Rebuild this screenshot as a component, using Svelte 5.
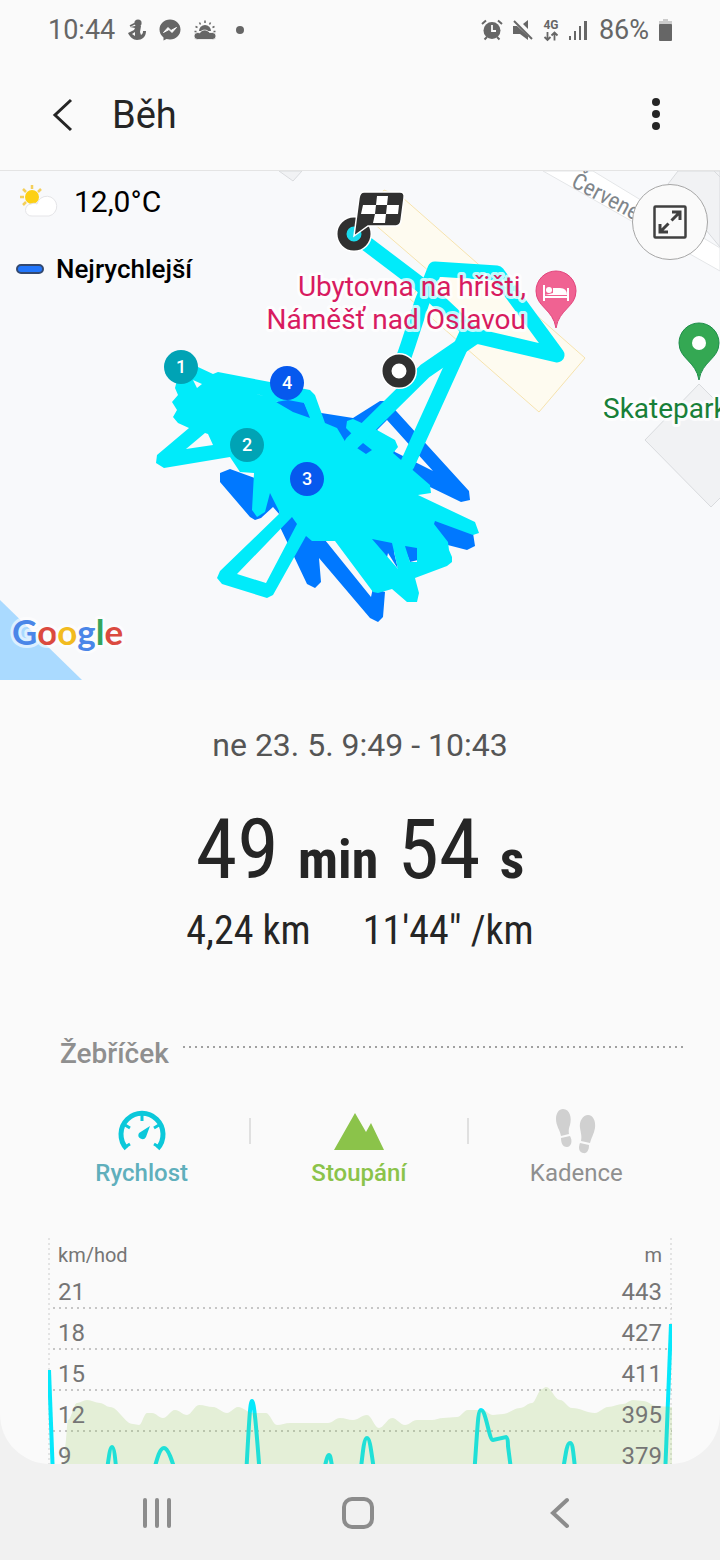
<script lang="ts">
  /**
   * Workout Detail Screen
   *
   * Route map, workout summary and the speed / elevation chart of one run.
   *
   * @component
   */

  type Point = [number, number];

  const kilometers = [
    { label: '1', x: 181, y: 367, fast: false },
    { label: '2', x: 247, y: 445, fast: false },
    { label: '3', x: 307, y: 479, fast: true },
    { label: '4', x: 287, y: 383, fast: true },
  ];

  const axisRows = [
    { speed: '21', elevation: '443' },
    { speed: '18', elevation: '427' },
    { speed: '15', elevation: '411' },
    { speed: '12', elevation: '395' },
    { speed: '9', elevation: '379' },
  ];

  const gridLines = [70, 111, 152, 193];

  const elevation: Point[] = [
    [16, 239], [17, 209], [20, 182], [29, 165], [39, 162], [52, 165], [62, 169], [85, 186],
    [91, 187], [99, 175], [104, 175], [115, 180], [127, 172], [139, 177], [151, 167], [165, 169],
    [179, 175], [190, 169], [205, 175], [218, 175], [229, 187], [242, 185], [280, 185], [292, 180],
    [305, 182], [319, 177], [331, 190], [344, 180], [357, 187], [369, 182], [384, 182], [395, 180],
    [409, 179], [420, 172], [434, 172], [445, 177], [455, 176], [472, 170], [484, 165], [494, 151],
    [498, 149], [512, 162], [524, 170], [547, 175], [560, 169], [575, 166], [585, 162], [595, 163],
    [609, 168], [624, 169],
  ];

  // Smooth curve through the points, flat at each of them
  function smooth(points: Point[]): string {
    return points
      .map(([x, y], i) => {
        if (i === 0) return `M${x} ${y}`;
        const [px, py] = points[i - 1];
        const dx = (x - px) * 0.36;
        return `C${px + dx} ${py} ${x - dx} ${y} ${x} ${y}`;
      })
      .join(' ');
  }

  const elevationArea = `${smooth(elevation)} V239 H16 Z`;
</script>

<div class="screen">
  <div class="content">
    <div class="status-bar">
      <div class="status-group">
        <span class="status-text">10:44</span>
        <svg width="18" height="22" viewBox="0 0 18 22" aria-hidden="true">
          <circle cx="10" cy="4" r="3.6" fill="currentColor" />
          <path d="M7 7H13L12 13L13 16C15 15 15 13 15 12H18C18 18 14 21 9 21C5 21 2 18 0 14L6 11L7 9L2 8Z" fill="currentColor" />
          <path d="M2 7L7 4.500" stroke="currentColor" stroke-width="1.6" />
          <path d="M4 15L7 13L7 17Z" fill="#fafafa" />
        </svg>
        <svg width="22" height="22" viewBox="0 0 22 22" aria-hidden="true">
          <path d="M11 .5C5 .5.5 5 .5 10.500c0 3.300 1.500 6 4 7.900V21.500l3-1.500c1.100.3 2.300.5 3.500.5 6 0 10.500-4.500 10.500-10S17 .5 11 .5Z" fill="currentColor" />
          <path d="M4.500 13.500L9 8.500L12 11.500L17.500 8.500L13 13.500L10 10.500Z" fill="#fafafa" stroke="#fafafa" stroke-linejoin="round" />
        </svg>
        <svg width="22" height="20" viewBox="0 0 22 20" fill="none" aria-hidden="true">
          <path d="M5 11A6 6 0 0 1 17 11" fill="currentColor" />
          <path d="M3.500 19.500a3.500 3.500 0 0 1 0-7c1 0 1.500.2 2 .5A6 6 0 0 1 15.500 12.500h3a3.500 3.500 0 0 1 0 7Z" fill="currentColor" stroke="#fafafa" stroke-width=".8" />
          <path d="M11 .5V3M5.500 2.500L6.500 4.500M16.500 2.500L15.500 4.500M1.500 6.500L3.500 7.500M20.500 6.500L18.500 7.500M.5 11.500H2.500M19.500 11.500H21.500" stroke="currentColor" stroke-width="1.500" />
        </svg>
        <span class="more-dot"></span>
      </div>
      <div class="status-group status-group--right">
        <svg width="22" height="22" viewBox="0 0 22 22" fill="none" stroke="currentColor" stroke-width="2" aria-hidden="true">
          <circle cx="11" cy="11.500" r="8.500" fill="currentColor" stroke="none" />
          <path d="M1 5L5 1.500M21 5L17 1.500M3.500 20.500L6 18M18.500 20.500L16 18" />
          <path d="M11 6V12H15" stroke="#fafafa" stroke-width="1.800" />
        </svg>
        <svg width="20" height="20" viewBox="0 0 20 20" aria-hidden="true">
          <path d="M0 6H4L15 16V20L7 14H0Z" fill="currentColor" />
          <path d="M15 0V9L10 4Z" fill="currentColor" />
          <path d="M2 0L20 18" stroke="#fafafa" stroke-width="2" />
          <path d="M1 1L19 19" stroke="currentColor" stroke-width="2" />
        </svg>
        <svg width="16" height="24" viewBox="0 0 16 24" aria-hidden="true">
          <text x="8" y="11" class="network-text">4G</text>
          <path d="M4.500 14V22M1.500 19L4.500 22L7.500 19M11.500 22.500V14.500M8.500 17.500L11.500 14.500L14.500 17.500" stroke="currentColor" stroke-width="1.800" fill="none" />
        </svg>
        <svg width="18" height="20" viewBox="0 0 18 20" fill="currentColor" aria-hidden="true">
          <rect x="0" y="16" width="2" height="4" />
          <rect x="5" y="11" width="2" height="9" />
          <rect x="10" y="6" width="2" height="14" />
          <rect x="15" y="1" width="3" height="19" />
        </svg>
        <span class="status-text battery-text">86%</span>
        <svg width="13" height="22" viewBox="0 0 13 22" aria-hidden="true">
          <path d="M4 0H9V2H13V6H0V2H4Z" fill="#cccccc" />
          <rect y="5" width="13" height="17" rx="1" fill="currentColor" />
        </svg>
      </div>
    </div>

    <header class="app-bar">
      <button class="icon-button" aria-label="Zpět">
        <svg width="24" height="34" viewBox="0 0 24 34" fill="none" aria-hidden="true">
          <path d="M19 2L3 17L19 32" stroke="currentColor" stroke-width="3" />
        </svg>
      </button>
      <h1>Běh</h1>
      <button class="icon-button" aria-label="Další možnosti">
        <svg width="24" height="34" viewBox="0 0 24 34" fill="currentColor" aria-hidden="true">
          <circle cx="12" cy="4" r="4" />
          <circle cx="12" cy="16" r="4" />
          <circle cx="12" cy="28" r="4" />
        </svg>
      </button>
    </header>

    <section class="map">
      <svg class="map-canvas" viewBox="0 171 720 509" preserveAspectRatio="xMidYMid slice" role="img" aria-label="Mapa trasy">
        <!-- Terrain -->
        <rect x="0" y="171" width="720" height="509" fill="#f8f9fb" />
        <path d="M0 600L82 680H0Z" fill="#aadaff" />
        <path d="M543 171H593L720 248V271Z" fill="#ffffff" stroke="#e4e6e8" />
        <path d="M678 171L668 184L720 247V171Z" fill="#f1f2f4" stroke="#d9dbde" />
        <path d="M714 171L720 177" stroke="#d9dbde" />
        <path d="M699 384L645 440L711 507L725 493V410Z" fill="#f1f2f4" stroke="#d9dbde" />
        <path d="M279 171L293 181L302 171Z" fill="#f1f2f4" stroke="#d9dbde" />
        <path d="M403 198L585 358L539 412L410 299L430 272L365 216L384 190Z" fill="#fefbf0" stroke="#f6e3ae" />
        <text class="street" x="570" y="186" transform="rotate(28 570 186)">Červené</text>

        <!-- Fastest parts of the route -->
        <g fill="#0078ff">
          <path d="M275 403L287 396L303 400L312 420L293 413Z" />
          <path fill-rule="evenodd" d="M315 412L353 418L380 401H387L469 491L470 500L461 502L430 487L400 480L330 470ZM377 430L387 420L433 471L395 452Z" />
          <path d="M220 473L230 469L252 477L275 485L280 515L273 507L261 518L255 520L250 517L220 482Z" />
          <path d="M280 527L292 513L325 540L371 597L373 588L385 592L383 617L378 622L370 618L319 558L321 582L315 588L307 584Z" />
          <path d="M430 518L473 533L475 546L467 550L440 543Z" />
          <path d="M370 537L394 542V552L398 569L388 553L386 562Z" />
          <path d="M403 544H418V560L410 562Z" />
        </g>

        <!-- Route -->
        <path
          class="route-area"
          fill-rule="evenodd"
          d="M181 367L198 367L213 374L218 372L270 382L310 390L315 395L325 423L337 428L346 443L353 435L346 428L347 421L353 419L377 430L395 440L398 447L393 453L430 485L431 493L418 495L475 522L479 533L473 535L435 521L434 524L448 542L449 550L452 557V562L447 566L415 578L419 593L417 602H407L392 589L378 593L373 592L335 541H312L306 536L273 595L267 598L222 584L217 578L220 571L280 513L270 493L265 512L257 517L252 510L254 473L240 472L230 457L164 468L156 463L157 455L189 428L178 423L173 417L177 410L172 402L178 395L175 388L177 380Z
          M186 449L205 433L208 434L213 445Z
          M237 574L292 517L297 524L266 583Z
          M193 380L202 384L197 388Z
          M253 393L264 396L260 395Z
          M276 402L288 400L304 403L310 418L293 412Z
          M372 539L392 543L398 569Z
          M405 546L417 548V562L410 562Z
          M357 448L363 443L372 450L366 454Z"
        />
        <g class="route">
          <path d="M355 235L421 285L470 331" />
          <path d="M399 371L408 345L422 302L435 269L497 273L557 355L476 336L425 371L352 443" />
          <path d="M466 335L407 465" />
        </g>

        {#each kilometers as km}
          <circle cx={km.x} cy={km.y} r="17" fill={km.fast ? '#0659ee' : '#00a3b5'} />
          <text class="km" x={km.x} y={km.y + 6}>{km.label}</text>
        {/each}

        <!-- Start -->
        <circle cx="399" cy="371" r="12" fill="#ffffff" stroke="#ffffff" stroke-width="12" />
        <circle cx="399" cy="371" r="12" fill="#ffffff" stroke="#303030" stroke-width="9" />

        <!-- Finish -->
        <circle cx="354" cy="234" r="18" fill="#ffffff" />
        <circle cx="354" cy="234" r="12" fill="#19dcee" stroke="#303030" stroke-width="9" />
        <path d="M364 192H400Q405 192 404 198L401 221Q400 226 396 226H368L354 236L359 198Q360 192 364 192Z" fill="#303030" stroke="#ffffff" stroke-width="1.500" />
        <path d="M377 196H388L387 205H376ZM363 205H376L375 214H361ZM387 205H399L398 214H386ZM375 214H386L385 223H373Z" fill="#ffffff" />

        <!-- Places -->
        <path d="M556 328C553 309 536 307 536 291A20 20 0 0 1 576 291C576 307 559 309 556 328Z" fill="#f06292" stroke="#e2447c" />
        <path d="M544 285V301M544 297H568M568 301V288" stroke="#ffffff" stroke-width="2" />
        <circle cx="549" cy="290" r="3" fill="#ffffff" />
        <path d="M553 288H560Q567 288 567 295H545L553 293Z" fill="#ffffff" />
        <text class="place place--lodging" x="526" y="296">Ubytovna na hřišti,</text>
        <text class="place place--lodging" x="526" y="329">Náměšť nad Oslavou</text>

        <path d="M699 380C696 361 679 359 679 343A20 20 0 0 1 719 343C719 359 702 361 699 380Z" fill="#34a853" stroke="#1e8e4a" />
        <circle cx="699" cy="343" r="7" fill="#ffffff" />
        <text class="place place--park" x="603" y="418">Skatepark</text>

        <text class="google" x="12" y="645">
          <tspan fill="#4a86e8">G</tspan><tspan fill="#db4a3f">o</tspan><tspan fill="#f2bb20">o</tspan><tspan fill="#4a86e8">g</tspan><tspan fill="#35a55b">l</tspan><tspan fill="#db4a3f">e</tspan>
        </text>
      </svg>

      <div class="map-info">
        <div class="weather">
          <svg width="40" height="34" viewBox="0 0 40 34" aria-hidden="true">
            <path d="M12 0V4M3 4L6 7M21 4L18 7M0 12H4M3 20L6 17" stroke="#f4cf5a" stroke-width="2.500" />
            <circle cx="12" cy="12" r="7" fill="#fdd015" />
            <path d="M12 31a6 6 0 0 1-1-12c2-1 4-1 6 0A10 10 0 1 1 29 31Z" fill="#ffffff" stroke="#e5e5e8" />
            <path d="M7 27a7 6 0 0 1 12-5" fill="#ffffff" />
          </svg>
          <span>12,0°C</span>
        </div>
        <div class="legend">
          <span class="legend-swatch"></span>
          <span>Nejrychlejší</span>
        </div>
      </div>

      <button class="expand-button" aria-label="Zvětšit mapu">
        <svg width="34" height="34" viewBox="0 0 34 34" fill="none" stroke="currentColor" aria-hidden="true">
          <rect x="1.500" y="1.500" width="31" height="31" rx="1" stroke-width="2.500" />
          <path d="M18.500 15.500L27 7M19 7H27V15M15.500 18.500L7 27M7 19V27H15" stroke-width="3" />
        </svg>
      </button>
    </section>

    <section class="summary">
      <p class="date">ne 23. 5. 9:49 - 10:43</p>
      <p class="duration">49 <span>min</span> 54 <span>s</span></p>
      <p class="totals"><span>4,24 km</span><span>11'44" /km</span></p>
    </section>

    <div class="section-head">
      <h2>Žebříček</h2>
      <div class="dotted-rule"></div>
    </div>

    <div class="tabs">
      <button class="tab tab--speed">
        <svg width="50" height="46" viewBox="0 0 50 46" fill="none" aria-hidden="true">
          <path d="M9.500 40.500A21 21 0 1 1 40.500 40.500" stroke="#0bc8da" stroke-width="5" />
          <path d="M8 39L13 36M42 39L37 36M25 5V13M8 17L13 20M42 17L37 20" stroke="#0bc8da" stroke-width="3" />
          <path d="M33 18L29 29A4 4 0 1 1 22 25Z" fill="#0bc8da" />
        </svg>
        Rychlost
      </button>
      <span class="tab-divider"></span>
      <button class="tab tab--climb">
        <svg width="50" height="46" viewBox="0 0 50 46" aria-hidden="true">
          <path d="M0 42L21 5L32 24L37 15L50 42Z" fill="#8bc34a" />
        </svg>
        Stoupání
      </button>
      <span class="tab-divider"></span>
      <button class="tab tab--cadence">
        <svg width="50" height="46" viewBox="0 0 50 46" fill="#d0d0d0" aria-hidden="true">
          <path d="M12 1C19 1 21 10 19 17C17 22 18 25 18 26L10 28C9 22 5 18 5 11C5 5 8 1 12 1Z" />
          <path d="M10 30L19 28C22 33 20 39 16 39C11 39 10 34 10 30Z" />
          <path d="M37 7C42 7 45 13 44 20C43 26 40 30 39 35L30 33C31 28 30 26 29 20C28 13 32 7 37 7Z" />
          <path d="M29 35L38 37C38 42 36 46 32 45C28 44 27 40 29 35Z" />
        </svg>
        Kadence
      </button>
    </div>

    <section class="chart">
      <svg class="chart-canvas" viewBox="0 0 624 239" preserveAspectRatio="none" aria-hidden="true">
        <g class="grid">
          {#each gridLines as y}
            <path d="M5 {y}H624" />
          {/each}
        </g>
        <path class="chart-side" d="M1 0V239M623 0V239" />
        <g class="speed">
          <path d="M1 132L5 239" />
          <path d="M58 239C61 218 62 209 64 209S67 218 69 239" />
          <path d="M104 239C110 217 112 210 116 210S124 222 129 239" />
          <path d="M198 239C201 185 202 163 204 163S208 185 212 239" />
          <path d="M274 239C278 225 279 217 281 217S283 225 286 239" />
          <path d="M312 239C315 212 316 200 319 200S323 212 327 239" />
          <path d="M426 239C430 182 430 172 433 172C438 172 441 202 445 202L458 199Q460 200 460 208L464 239" />
          <path d="M514 239C518 213 519 205 522 205S525 213 528 239" />
          <path d="M617 239L623 86" />
        </g>
        <path d={elevationArea} fill="#8bc34a" fill-opacity="0.2" />
      </svg>
      <div class="axis-units"><span>km/hod</span><span>m</span></div>
      {#each axisRows as row}
        <div class="axis-row"><span>{row.speed}</span><span>{row.elevation}</span></div>
      {/each}
    </section>
  </div>

  <nav class="nav-bar">
    <button class="icon-button" aria-label="Poslední aplikace">
      <svg width="32" height="34" viewBox="0 0 32 34" fill="none" aria-hidden="true">
        <path d="M4 4V30M16 4V30M28 4V30" stroke="currentColor" stroke-width="4" stroke-linecap="round" />
      </svg>
    </button>
    <button class="icon-button" aria-label="Domů">
      <svg width="34" height="34" viewBox="0 0 34 34" fill="none" aria-hidden="true">
        <rect x="3" y="3" width="28" height="28" rx="8" stroke="currentColor" stroke-width="4" />
      </svg>
    </button>
    <button class="icon-button" aria-label="Zpět">
      <svg width="32" height="34" viewBox="0 0 32 34" fill="none" aria-hidden="true">
        <path d="M24 4L10 17L24 30" stroke="currentColor" stroke-width="4" stroke-linecap="round" />
      </svg>
    </button>
  </nav>
</div>

<style>
  :global(body) {
    margin: 0;
    background-color: #f1f1f1;
  }

  .screen {
    display: flex;
    flex-direction: column;
    height: 100vh;
    font-family: Roboto, 'Noto Sans', sans-serif;
    color: #252525;
  }

  .content {
    flex: 1;
    min-height: 0;
    overflow: hidden;
    border-radius: 0 0 50px 50px;
    background-color: #fafafa;
  }

  h1,
  h2,
  p {
    margin: 0;
    font-weight: 400;
  }

  button {
    padding: 0;
    border: 0;
    background: none;
    color: inherit;
    font: inherit;
    cursor: pointer;
  }

  svg {
    display: block;
  }

  /* Status bar */
  .status-bar {
    display: flex;
    align-items: center;
    justify-content: space-between;
    height: 60px;
    padding: 0 48px;
    color: #666666;
  }

  .status-group {
    display: flex;
    align-items: center;
    gap: 13px;
  }

  .status-group--right {
    gap: 10px;
  }

  .status-text {
    font-size: 27px;
    line-height: 32px;
  }

  .battery-text {
    margin-left: 2px;
  }

  .more-dot {
    width: 8px;
    height: 8px;
    margin-left: 7px;
    border-radius: 50%;
    background-color: currentColor;
  }

  .network-text {
    font-size: 12px;
    font-weight: 700;
    text-anchor: middle;
    fill: currentColor;
  }

  /* App bar */
  .app-bar {
    display: flex;
    align-items: center;
    height: 110px;
    padding: 0 52px;
    border-bottom: 1px solid #e4e4e4;
  }

  .app-bar h1 {
    flex: 1;
    margin-left: 36px;
    font-size: 38px;
    line-height: 48px;
  }

  .icon-button {
    display: flex;
    align-items: center;
    justify-content: center;
  }

  /* Map */
  .map {
    position: relative;
    height: 509px;
    overflow: hidden;
  }

  .map-canvas {
    width: 100%;
    height: 100%;
  }

  .route-area {
    fill: #00ebfa;
  }

  .route {
    fill: none;
    stroke: #00ebfa;
    stroke-width: 15px;
    stroke-linejoin: round;
    stroke-linecap: round;
  }

  .km {
    font-size: 18px;
    font-weight: 500;
    text-anchor: middle;
    fill: #ffffff;
  }

  .street {
    font-family: 'Roboto Condensed', Roboto, sans-serif;
    font-size: 23px;
    fill: #80868b;
  }

  .place {
    font-size: 28px;
    paint-order: stroke;
    stroke: rgba(255, 255, 255, 0.75);
    stroke-width: 6px;
    stroke-linejoin: round;
  }

  .place--lodging {
    text-anchor: end;
    fill: #d81b60;
  }

  .place--park {
    fill: #188038;
  }

  .google {
    font-family: Lato, 'Open Sans', sans-serif;
    font-size: 35px;
    font-weight: 700;
    paint-order: stroke;
    stroke: rgba(255, 255, 255, 0.6);
    stroke-width: 6px;
    stroke-linejoin: round;
  }

  .map-info {
    position: absolute;
    top: 12px;
    left: 16px;
    color: #000000;
  }

  .weather {
    display: flex;
    align-items: center;
    gap: 14px;
    margin-bottom: 28px;
    padding-left: 4px;
    font-size: 30px;
    line-height: 38px;
  }

  .legend {
    display: flex;
    align-items: center;
    gap: 12px;
    font-size: 26px;
    font-weight: 500;
    line-height: 40px;
  }

  .legend-swatch {
    box-sizing: border-box;
    width: 28px;
    height: 10px;
    border: 2px solid #34496f;
    border-radius: 5px;
    background-color: #2276fb;
  }

  .expand-button {
    position: absolute;
    top: 13px;
    right: 12px;
    display: flex;
    align-items: center;
    justify-content: center;
    box-sizing: border-box;
    width: 76px;
    height: 76px;
    border: 1px solid #a6a6a6;
    border-radius: 50%;
    background-color: #fafafa;
    color: #404040;
  }

  /* Summary */
  .summary {
    padding-top: 45px;
    text-align: center;
  }

  .date {
    font-size: 32px;
    line-height: 40px;
    color: #555555;
  }

  .duration {
    margin-top: 35px;
    font-family: 'Roboto Condensed', Roboto, sans-serif;
    font-size: 84px;
    line-height: 100px;
  }

  .duration span {
    font-size: 54px;
    font-weight: 700;
    line-height: 54px;
  }

  .totals {
    display: flex;
    justify-content: center;
    gap: 52px;
    margin-top: 7px;
    font-family: 'Roboto Condensed', Roboto, sans-serif;
    font-size: 40px;
    line-height: 48px;
  }

  /* Section head */
  .section-head {
    display: flex;
    gap: 14px;
    margin-top: 81px;
    padding: 0 36px 0 60px;
  }

  .section-head h2 {
    font-size: 28px;
    font-weight: 500;
    line-height: 36px;
    color: #8f8f8f;
  }

  .dotted-rule {
    flex: 1;
    height: 2px;
    margin-top: 10px;
    background: repeating-linear-gradient(to right, #a0a0a0 0 2px, transparent 2px 6px);
  }

  /* Tabs */
  .tabs {
    display: flex;
    margin-top: 36px;
    padding: 0 36px 0 34px;
  }

  .tab {
    display: flex;
    flex: 1;
    flex-direction: column;
    align-items: center;
    gap: 4px;
    font-size: 24px;
    line-height: 30px;
  }

  .tab--speed {
    font-weight: 500;
    color: #5fafbc;
  }

  .tab--climb {
    font-weight: 500;
    color: #8bc34a;
  }

  .tab--cadence {
    color: #8f8f8f;
  }

  .tab-divider {
    width: 2px;
    height: 26px;
    margin-top: 10px;
    background-color: #e0e0e0;
  }

  /* Chart */
  .chart {
    position: relative;
    margin: 50px 48px 0;
    color: #757575;
  }

  .chart-canvas {
    position: absolute;
    inset: 0;
    width: 100%;
    height: 100%;
  }

  .grid {
    stroke: #c6c6c6;
    stroke-width: 2px;
    stroke-dasharray: 2 4;
  }

  .chart-side {
    stroke: #cccccc;
    stroke-width: 1px;
    stroke-dasharray: 2 3;
  }

  .speed {
    fill: none;
    stroke: #05e8fb;
    stroke-width: 4px;
  }

  .axis-units,
  .axis-row {
    position: relative;
    display: flex;
    justify-content: space-between;
    padding: 0 10px;
  }

  .axis-units {
    font-size: 20px;
    line-height: 34px;
  }

  .axis-row {
    font-size: 24px;
    line-height: 41px;
  }

  /* Navigation bar */
  .nav-bar {
    display: grid;
    grid-template-columns: repeat(3, 1fr);
    height: 94px;
    padding: 2px 60px 0 56px;
    color: #8c8c8c;
  }
</style>
